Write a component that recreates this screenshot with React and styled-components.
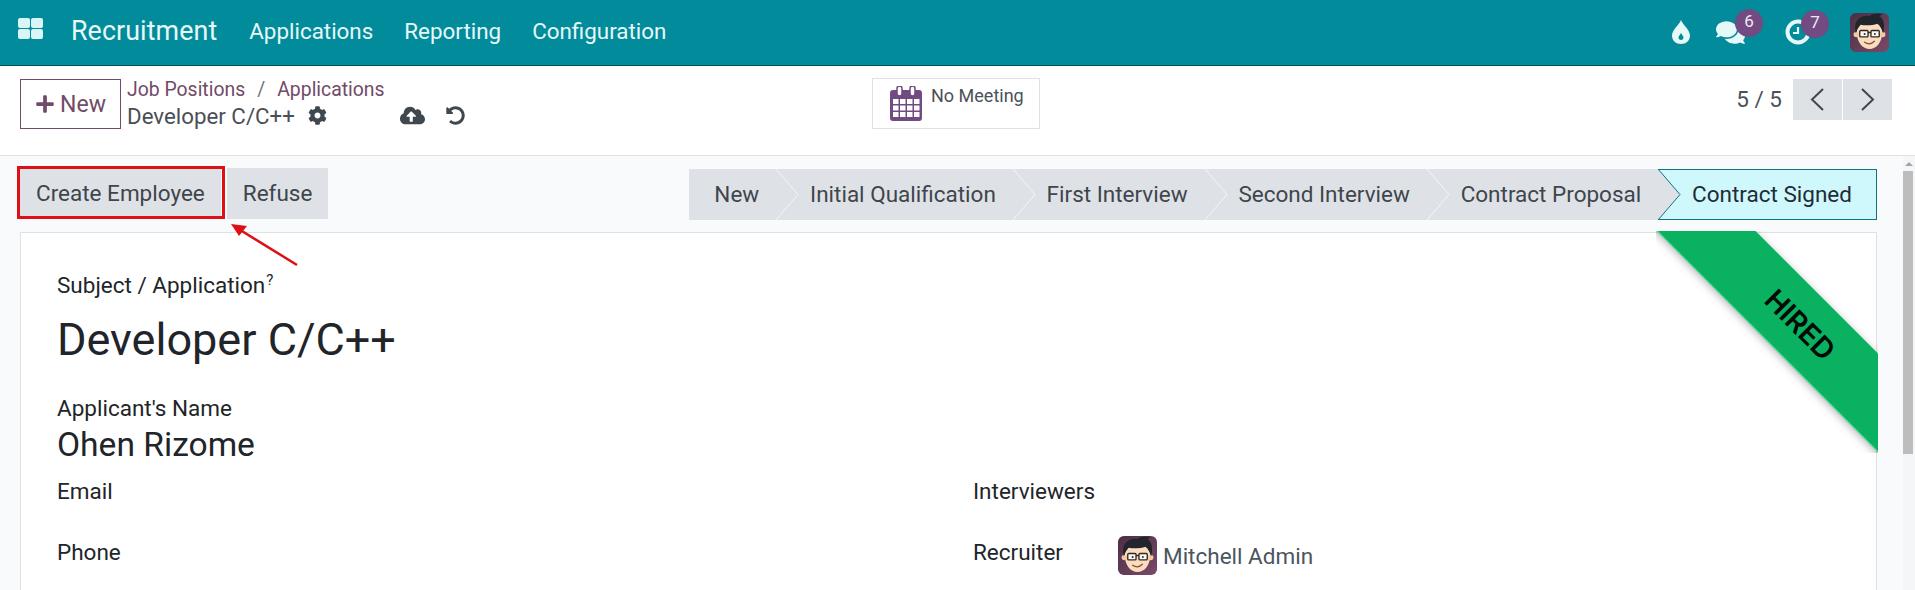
import React from 'react';
import styled, { createGlobalStyle } from 'styled-components';
import { FaCog, FaCloudUploadAlt, FaUndoAlt, FaPlus, FaComments } from 'react-icons/fa';

const GlobalStyle = createGlobalStyle`
  html, body {
    margin: 0;
    height: 590px;
    overflow: hidden;
    background: #fff;
    font-family: Roboto, "Liberation Sans", sans-serif;
    color: #212529;
  }
`;

const Page = styled.div`
  width: 1915px;
  height: 590px;
  display: flex;
  flex-direction: column;
  overflow: hidden;
`;

const NavBar = styled.header`
  height: 66px;
  flex: none;
  box-sizing: border-box;
  display: flex;
  align-items: center;
  padding: 0 26px 3px 18px;
  background: #028b9b;
  border-bottom: 1px solid #045059;
  color: #e6f8f8;
`;

const AppsIcon = styled.div`
  display: grid;
  grid-template-columns: 12px 12px;
  grid-template-rows: 10px 10px;
  gap: 1px;
  margin-top: -5px;

  span {
    background: #d9f5f5;
    border-radius: 2px;
  }
`;

const Brand = styled.div`
  margin-left: 28px;
  font-size: 26.8px;
  letter-spacing: 0.1px;
`;

const NavLink = styled.div`
  margin-left: ${(p) => p.$gap}px;
  font-size: 22.4px;
`;

const NavRight = styled.div`
  margin-left: auto;
  display: flex;
  align-items: center;
  padding-top: 2px;
`;

const NavIcon = styled.div`
  position: relative;
  display: flex;
  margin-left: ${(p) => p.$gap}px;
`;

const Badge = styled.span`
  position: absolute;
  top: -9px;
  left: ${(p) => p.$left}px;
  width: 28px;
  height: 28px;
  border-radius: 50%;
  background: #714b82;
  color: #f1e6f4;
  font-size: 17px;
  line-height: 25px;
  text-align: center;
`;

const ControlPanel = styled.section`
  height: 90px;
  flex: none;
  box-sizing: border-box;
  display: grid;
  grid-template-columns: 852px 1fr auto;
  padding: 13px 23px 0 20px;
  background: #fff;
  border-bottom: 1px solid #dee2e6;
`;

const PanelLeft = styled.div`
  display: flex;
  align-items: flex-start;
`;

const NewButton = styled.button`
  width: 101px;
  height: 50px;
  box-sizing: border-box;
  display: flex;
  align-items: center;
  justify-content: center;
  gap: 5px;
  padding: 0;
  background: #fff;
  border: 1px solid #714b67;
  color: #714b67;
  font: 23px Roboto, sans-serif;

  svg {
    width: 20px;
    height: 20px;
  }
`;

const Crumbs = styled.div`
  margin-left: 6px;
  margin-top: -3px;
`;

const CrumbLine = styled.div`
  display: flex;
  align-items: center;
  height: 26px;
  font-size: 19.4px;
  color: #714b67;
`;

const CrumbSep = styled.span`
  margin: 0 12px;
  color: #6c757d;
`;

const CurrentLine = styled.div`
  display: flex;
  align-items: center;
  height: 27px;
  font-size: 22.3px;
  color: #4a4f55;

  svg {
    color: #3f474f;
  }
`;

const SaveIcons = styled.div`
  display: flex;
  align-items: center;
  gap: 21px;
  margin-left: 73px;
`;

const MeetingBox = styled.div`
  width: 168px;
  height: 51px;
  box-sizing: border-box;
  display: flex;
  align-items: flex-start;
  margin-top: -1px;
  padding: 7px 0 0 17px;
  border: 1px solid #dee2e6;
  font-size: 18px;
  line-height: 23px;
  color: #4b5158;

  span {
    margin: -2px 0 0 9px;
  }
`;

const Pager = styled.div`
  display: flex;
  align-items: flex-start;
`;

const PagerText = styled.span`
  margin: 7px 11px 0 0;
  font-size: 22.5px;
  color: #4b5158;
`;

const PagerButton = styled.div`
  width: 49px;
  height: 41px;
  margin-left: ${(p) => (p.$next ? 1 : 0)}px;
  display: flex;
  align-items: center;
  justify-content: center;
  background: #dee2e6;
`;

const Body = styled.div`
  flex: 1;
  display: flex;
  min-height: 0;
  background: #f9fafb;
`;

const Content = styled.main`
  flex: 1;
  min-width: 0;
  box-sizing: border-box;
  padding: 12px 26px 0 20px;
`;

const ActionRow = styled.div`
  display: flex;
  justify-content: space-between;
  align-items: flex-start;
`;

const Actions = styled.div`
  display: flex;
  gap: 6px;
`;

const ActionButton = styled.div`
  position: relative;
  height: 51px;
  box-sizing: border-box;
  display: flex;
  align-items: center;
  padding: 0 16px 2px;
  background: #dee2e6;
  font-size: 22.5px;
  color: #3f454c;
`;

const RedFrame = styled.span`
  position: absolute;
  inset: -2px -4px 0 -3px;
  border: 3px solid #df0f16;
`;

const StatusBar = styled.div`
  display: flex;
  margin-top: 1px;
`;

const StatusItem = styled.div`
  position: relative;
  height: 51px;
  box-sizing: border-box;
  display: flex;
  align-items: center;
  padding: 0 ${(p) => (p.$active ? 24 : 17)}px 2px ${(p) => (p.$first ? 25 : 33.8)}px;
  background: ${(p) => (p.$active ? '#cff8fc' : '#dee2e6')};
  border: ${(p) => (p.$active ? '1px solid #0f7480' : 'none')};
  border-left: none;
  font-size: 22.5px;
  color: ${(p) => (p.$active ? '#212b36' : '#3f454c')};
`;

const Chevron = styled.svg`
  position: absolute;
  left: 0;
  top: ${(p) => (p.$active ? -1 : 0)}px;
  width: 23px;
  height: 51px;
`;

const Sheet = styled.div`
  position: relative;
  height: 400px;
  box-sizing: border-box;
  margin-top: 12px;
  padding: 39px 36px 0 36px;
  background: #fff;
  border: 1px solid #dee2e6;
`;

const Ribbon = styled.div`
  position: absolute;
  top: -2px;
  right: -2px;
  width: 222px;
  height: 222px;
  overflow: hidden;
`;

const RibbonBand = styled.div`
  position: absolute;
  left: -36px;
  top: 59px;
  width: 360px;
  height: 70px;
  box-sizing: border-box;
  display: flex;
  align-items: center;
  justify-content: center;
  transform: rotate(45deg);
  background: #0ab160;
  border-bottom: 1px solid #6fe0a8;
  box-shadow: 0 2px 8px rgba(0, 0, 0, 0.28);
  color: #030a06;
  font-family: Inter, Roboto, sans-serif;
  font-size: 28.5px;
  font-weight: 600;
`;

const FieldLabel = styled.div`
  font-size: 22.5px;
  line-height: 26px;

  sup {
    font-size: 15px;
    line-height: 0;
    margin-left: 1px;
  }
`;

const Title = styled.h1`
  margin: 12px 0 0;
  font-size: 45px;
  font-weight: 400;
  line-height: 60px;
`;

const NameLabel = styled(FieldLabel)`
  margin-top: 25px;
`;

const Name = styled.div`
  margin-top: 2px;
  font-size: 33.6px;
  line-height: 44px;
`;

const FieldGrid = styled.div`
  display: grid;
  grid-template-columns: 916px 145px 1fr;
  grid-auto-rows: 61px;
  margin-top: 11px;
`;

const FieldValue = styled.div`
  display: flex;
  align-items: center;
  gap: 6px;
  height: 39px;
  margin-top: -3px;
  font-size: 22.5px;
  color: #4a5560;
`;

const Scrollbar = styled.aside`
  width: 12px;
  flex: none;
  position: relative;
  background: #f5f6f7;
`;

const ScrollArrow = styled.span`
  position: absolute;
  top: 6px;
  left: 2px;
  border-left: 4px solid transparent;
  border-right: 4px solid transparent;
  border-bottom: 4px solid #a3a3a3;
`;

const ScrollThumb = styled.span`
  position: absolute;
  top: 15px;
  left: 0;
  width: 10px;
  height: 283px;
  background: #bdbdbd;
`;

const Annotation = styled.svg`
  position: absolute;
  left: 225px;
  top: 220px;
  width: 80px;
  height: 50px;
`;

function Avatar({ size }) {
  return (
    <svg width={size} height={size} viewBox="0 0 40 40">
      <defs>
        <linearGradient id="avatarBg" x1="0" y1="0" x2="1" y2="1">
          <stop offset="0" stopColor="#4a2f45" />
          <stop offset="1" stopColor="#7a4a69" />
        </linearGradient>
      </defs>
      <rect width="40" height="40" rx="6" fill="url(#avatarBg)" />
      <path d="M7 20c0-10 6-13 13-13s13 4 13 13c0 10-6 17-13 17S7 30 7 20z" fill="#fbdcbc" />
      <circle cx="6.5" cy="22" r="2.8" fill="#f4c9a4" />
      <circle cx="33.5" cy="22" r="2.8" fill="#f4c9a4" />
      <path d="M6 21C3 9 9 2 20 3c3-3 10-3 13-2-1 1-2 2-3 2 5 3 6 10 4 18-1-4-3-8-6-10-5 2-13 2-17 1-2 2-4 5-5 9z" fill="#22252b" />
      <rect x="10" y="18" width="8.5" height="6.5" rx="1" fill="#fff7ec" stroke="#2a2a2e" strokeWidth="1.4" />
      <rect x="21.5" y="18" width="8.5" height="6.5" rx="1" fill="#fff7ec" stroke="#2a2a2e" strokeWidth="1.4" />
      <path d="M18.5 20h3" stroke="#2a2a2e" strokeWidth="1.4" />
      <circle cx="15" cy="21.5" r="1" fill="#2a2a2e" />
      <circle cx="25.5" cy="21.5" r="1" fill="#2a2a2e" />
      <path d="M15 30c3 2 7 2 10-1" stroke="#8a4b3c" strokeWidth="1.3" fill="none" strokeLinecap="round" />
    </svg>
  );
}

function DropIcon() {
  return (
    <svg width="18" height="24" viewBox="0 0 18 24">
      <path d="M9 0c2 5 9 10 9 15.5C18 20.5 14 24 9 24S0 20.5 0 15.5C0 10 7 5 9 0z" fill="#e6f8f8" />
      <path d="M9 13c1 2 2.5 3 2.5 4.5S10.4 20 9 20s-2.5-1-2.5-2.5S8 15 9 13z" fill="#028b9b" />
    </svg>
  );
}

function ClockIcon() {
  return (
    <svg width="26" height="26" viewBox="0 0 26 26">
      <circle cx="13" cy="13" r="10.5" fill="none" stroke="#e6f8f8" strokeWidth="4" />
      <path d="M13 8v6H8" fill="none" stroke="#e6f8f8" strokeWidth="2.2" />
    </svg>
  );
}

function CalendarIcon() {
  return (
    <svg width="32" height="35" viewBox="0 0 32 35">
      <rect x="0" y="4" width="32" height="31" rx="3" fill="#714b82" />
      <g fill="#fff">
        {[13, 19.5, 26].map((y) =>
          [3, 10, 17, 24].map((x) => <rect key={`${x}-${y}`} x={x} y={y} width="5.5" height="5" />),
        )}
      </g>
      <rect x="7" y="0" width="5" height="10" rx="2.5" fill="#fff" stroke="#714b82" strokeWidth="1.5" />
      <rect x="20" y="0" width="5" height="10" rx="2.5" fill="#fff" stroke="#714b82" strokeWidth="1.5" />
    </svg>
  );
}

function PagerArrow({ next }) {
  const points = next ? '3,2 14,12.5 3,23' : '14,2 3,12.5 14,23';
  return (
    <svg width="17" height="25" viewBox="0 0 17 25">
      <polyline points={points} fill="none" stroke="#3f474f" strokeWidth="2" />
    </svg>
  );
}

const stages = ['New', 'Initial Qualification', 'First Interview', 'Second Interview', 'Contract Proposal', 'Contract Signed'];

export default function App() {
  return (
    <Page>
      <GlobalStyle />
      <NavBar>
        <AppsIcon>
          <span />
          <span />
          <span />
          <span />
        </AppsIcon>
        <Brand>Recruitment</Brand>
        <NavLink $gap={32}>Applications</NavLink>
        <NavLink $gap={31}>Reporting</NavLink>
        <NavLink $gap={31}>Configuration</NavLink>
        <NavRight>
          <DropIcon />
          <NavIcon $gap={26}>
            <FaComments size={29} color="#e6f8f8" />
            <Badge $left={19}>6</Badge>
          </NavIcon>
          <NavIcon $gap={40}>
            <ClockIcon />
            <Badge $left={16}>7</Badge>
          </NavIcon>
          <NavIcon $gap={39}>
            <Avatar size={39} />
          </NavIcon>
        </NavRight>
      </NavBar>

      <ControlPanel>
        <PanelLeft>
          <NewButton>
            <FaPlus />
            New
          </NewButton>
          <Crumbs>
            <CrumbLine>
              Job Positions
              <CrumbSep>/</CrumbSep>
              Applications
            </CrumbLine>
            <CurrentLine>
              Developer C/C++
              <FaCog size={19} style={{ marginLeft: 13 }} />
              <SaveIcons>
                <FaCloudUploadAlt size={25} />
                <FaUndoAlt size={19} />
              </SaveIcons>
            </CurrentLine>
          </Crumbs>
        </PanelLeft>
        <div>
          <MeetingBox>
            <CalendarIcon />
            <span>No Meeting</span>
          </MeetingBox>
        </div>
        <Pager>
          <PagerText>5 / 5</PagerText>
          <PagerButton>
            <PagerArrow />
          </PagerButton>
          <PagerButton $next>
            <PagerArrow next />
          </PagerButton>
        </Pager>
      </ControlPanel>

      <Body>
        <Content>
          <ActionRow>
            <Actions>
              <ActionButton>
                Create Employee
                <RedFrame />
              </ActionButton>
              <ActionButton>Refuse</ActionButton>
            </Actions>
            <StatusBar>
              {stages.map((stage, index) => {
                const active = index === stages.length - 1;
                return (
                  <StatusItem key={stage} $first={index === 0} $active={active}>
                    {index > 0 && (
                      <Chevron $active={active} viewBox="0 0 23 51">
                        <polygon points="0,0 22,25.5 0,51" fill="#dee2e6" />
                        <polyline
                          points="0,0 22,25.5 0,51"
                          fill="none"
                          stroke={active ? '#0f7480' : '#f4f5f7'}
                          strokeWidth="1"
                        />
                      </Chevron>
                    )}
                    {stage}
                  </StatusItem>
                );
              })}
            </StatusBar>
          </ActionRow>

          <Sheet>
            <Ribbon>
              <RibbonBand>HIRED</RibbonBand>
            </Ribbon>
            <FieldLabel>
              Subject / Application<sup>?</sup>
            </FieldLabel>
            <Title>Developer C/C++</Title>
            <NameLabel>Applicant's Name</NameLabel>
            <Name>Ohen Rizome</Name>
            <FieldGrid>
              <FieldLabel>Email</FieldLabel>
              <FieldLabel>Interviewers</FieldLabel>
              <div />
              <FieldLabel>Phone</FieldLabel>
              <FieldLabel>Recruiter</FieldLabel>
              <FieldValue>
                <Avatar size={39} />
                Mitchell Admin
              </FieldValue>
            </FieldGrid>
          </Sheet>
        </Content>
        <Scrollbar>
          <ScrollArrow />
          <ScrollThumb />
        </Scrollbar>
      </Body>

      <Annotation viewBox="0 0 80 50">
        <line x1="72" y1="45" x2="12" y2="8" stroke="#df0f16" strokeWidth="2.5" />
        <polygon points="6,4 22,6 14,16" fill="#df0f16" />
      </Annotation>
    </Page>
  );
}
